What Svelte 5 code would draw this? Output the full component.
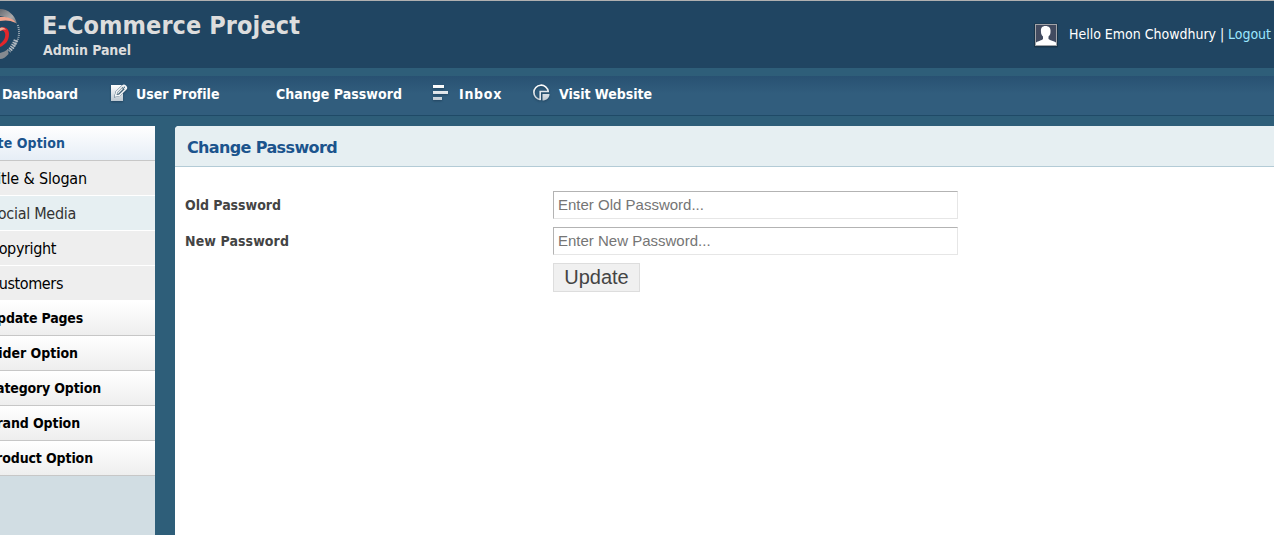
<script>
  const nav = [
    { label: 'Dashboard', icon: '', x: 2, w: 76 },
    { label: 'User Profile', icon: 'edit', x: 136, w: 83 },
    { label: 'Change Password', icon: '', x: 276, w: 126 },
    { label: 'Inbox', icon: 'lines', x: 459, w: 43 },
    { label: 'Visit Website', icon: 'chart', x: 559, w: 93 }
  ].map((n, i, all) => ({ ...n, gap: n.x - (i ? all[i - 1].x + all[i - 1].w : 0) }));

  const menu = [
    { label: 'Site Option', w: 81, kind: 'head open' },
    { label: 'Title & Slogan', w: 98, kind: 'sub' },
    { label: 'Social Media', w: 87, kind: 'sub hover' },
    { label: 'Copyright', w: 67, kind: 'sub' },
    { label: 'Customers', w: 74, kind: 'sub last' },
    { label: 'Update Pages', w: 96, kind: 'head' },
    { label: 'Slider Option', w: 93, kind: 'head' },
    { label: 'Category Option', w: 114, kind: 'head' },
    { label: 'Brand Option', w: 93, kind: 'head' },
    { label: 'Product Option', w: 106, kind: 'head' }
  ].map((m) => ({ ...m, end: m.kind.startsWith('sub') ? m.w - 11 : { 'Site Option': 65, 'Slider Option': 78 }[m.label] ?? m.w - 13 }));

  // Adjusts tracking so that a label occupies its column width.
  function track(node, width) {
    const natural = node.getBoundingClientRect().width;
    node.style.letterSpacing = (width - natural) / node.textContent.length + 'px';
  }
</script>

<div class="page">
  <header>
    <svg class="logo" width="21" height="60" viewBox="0 0 21 60">
      <defs>
        <linearGradient id="steel" x1="0" y1="0" x2="1" y2="1">
          <stop offset="0" stop-color="#666970" /><stop offset=".6" stop-color="#aaa9aa" /><stop offset="1" stop-color="#6d7882" />
        </linearGradient>
      </defs>
      <path d="M0 8C8 8 15 14 17 23C12 18 6 16 0 15Z" fill="url(#steel)" />
      <path d="M0 16C7 15.500 13 17 16 22C10 19 5 19 0 20Z" fill="#f2a48d" />
      <path d="M0 27C5 25 9 28 9 33C9 40 5 44 0 46V43C4 40 6 36 5 32C4 29 2 29 0 30Z" fill="#e3262b" />
      <path d="M0 27C3 26 5 27 6 29C4 28 2 29 0 30Z" fill="#f0b09a" />
      <path d="M0 52C3 51 6 50 8 48L8.500 53C6 56 3 58 0 58Z" fill="#858a90" />
      <path d="M17.800 24C21 33 18 43 9.500 49.500" fill="none" stroke="#9aa8b3" stroke-width="2" stroke-dasharray="1 1" />
      <path d="M16 39C14 44 12 47 9 50" fill="none" stroke="#b5bcc2" stroke-width="4.500" stroke-dasharray="1.500 1" />
    </svg>
    <div class="brand">
      <h1><span use:track={258}>E-Commerce Project</span></h1>
      <p><span use:track={88}>Admin Panel</span></p>
    </div>
    <div class="user">
      <svg width="24" height="25" viewBox="0 0 24 25">
        <rect x="0" y=".5" width="24" height="24" rx="1" fill="#183449" />
        <rect x="1.500" y="1.500" width="21" height="21" fill="#424b60" stroke="#a2a4a8" />
        <path d="M2 22V19.500C4 18 8 17.500 9 16V13.500C7.500 12 7 10.500 7 9C6.500 5 8 3 11.500 3S17 5 16.500 9C16.500 11 16 12 14.500 13.500V16C16 17.500 20 18 22 19.500V22Z" fill="#fff" />
      </svg>
      <span class="hello"><span use:track={147}>Hello Emon Chowdhury</span></span>
      <span class="bar">|</span>
      <a href="#logout"><span use:track={43}>Logout</span></a>
    </div>
  </header>

  <nav>
    {#each nav as n}
      <div class="item" style:padding-left={n.gap + 'px'} style:width={n.gap + n.w + 'px'}>
        {#if n.icon}
          <svg class="icon {n.icon}" width="20" height="22" viewBox="0 0 20 22">
            <defs>
              <linearGradient id="g-{n.icon}" gradientUnits="userSpaceOnUse" x1="0" y1="2" x2="0" y2="18">
                <stop offset="0" stop-color="#fff" /><stop offset="1" stop-color="#bdc8d1" />
              </linearGradient>
            </defs>
            {#if n.icon === 'edit'}
              <path d="M1 2H12L5.500 8.500L4 14.500L10 13L13 10V18H1Z" fill="url(#g-edit)" />
              <path d="M5.500 13L6.500 9L13 2.500C14.500 1.500 17.500 4.500 16 6L9.500 12.300Z" fill="#466579" stroke="#f5f7f8" stroke-width="1.500" />
              <path d="M12 3.500L15 6.500L16.500 4.500L14 2Z" fill="#f5f7f8" /><circle cx="14.300" cy="4.300" r=".7" fill="#315d7d" />
              <path d="M7.500 10.500L12.500 5.500" stroke="#e4e9ed" stroke-width="1.200" />
            {:else if n.icon === 'lines'}
              <path d="M1 2H12V5H1ZM1 8H16V11H1ZM1 14H10V17H1Z" fill="url(#g-lines)" />
            {:else}
              <path d="M8.500 16.600A7.200 7.200 0 1 1 16.200 8.500" fill="none" stroke="url(#g-chart)" stroke-width="1.700" />
              <path d="M8.200 17V8.500H17" fill="none" stroke="#e3e8ec" stroke-width="1.600" />
              <path d="M10.500 17.500V11H17.500C17.500 15 14.500 17.500 10.500 17.500Z" fill="url(#g-chart)" />
            {/if}
          </svg>
        {/if}
        <span use:track={n.w}>{n.label}</span>
      </div>
    {/each}
  </nav>

  <div class="body">
    <aside>
      {#each menu as m}
        <div class="row {m.kind}"><span use:track={m.w} style:margin-left={m.end - m.w + 'px'}>{m.label}</span></div>
      {/each}
    </aside>
    <main>
      <h2><span use:track={150}>Change Password</span></h2>
      <form>
        <label for="old"><span use:track={96}>Old Password</span></label>
        <input id="old" type="password" placeholder="Enter Old Password..." />
        <label for="new"><span use:track={104}>New Password</span></label>
        <input id="new" type="password" placeholder="Enter New Password..." />
        <i></i>
        <button type="button">Update</button>
      </form>
    </main>
  </div>
</div>

<style>
  :global(body) { margin: 0; }
  .page {
    width: 1274px; height: 535px; overflow: hidden; box-sizing: border-box;
    display: flex; flex-direction: column;
    background: #2e5e79; border-top: 1px solid #b0b0b0;
    font-family: "DejaVu Sans Condensed", "DejaVu Sans", Tahoma, sans-serif;
    font-stretch: condensed; color: #444;
  }
  span { white-space: nowrap; display: inline-block; flex: none; }
  header { height: 67px; flex: none; background: #204562; display: flex; align-items: flex-start; }
  .logo { flex: none; }
  .brand { padding: 9px 0 0 21px; flex: 1; color: #ddd; }
  h1 { margin: 0; font-size: 25px; line-height: 32px; height: 30px; }
  p { margin: 0; padding-left: 1px; font-size: 14px; line-height: 20px; font-weight: bold; }
  .user { display: flex; align-items: flex-start; padding: 22px 3px 0 0; color: #fff; font-size: 14px; line-height: 22px; }
  .user svg { margin-right: 11px; }
  .bar { width: 12px; text-align: center; }
  a { color: #9be7ff; text-decoration: none; }
  nav {
    height: 39px; flex: none; margin-top: 8px; display: flex;
    background: linear-gradient(#285172, #315d7d 45%); border-bottom: 1px solid #1f4a67;
    color: #fff; font-size: 14px; font-weight: bold; line-height: 36px;
  }
  .item { box-sizing: border-box; flex: none; display: flex; }
  .icon { margin: 7px 6px 0 -26px; flex: none; filter: drop-shadow(0 1px 1px #18364c99); }
  .lines { margin: 7px 7px 0 -27px; }
  .chart { margin: 7px 7px 0 -27px; }
  .body { display: flex; flex: 1; padding-top: 10px; }
  aside { width: 155px; background: #d1dde3; overflow: hidden; flex: none; }
  .row { height: 35px; box-sizing: border-box; line-height: 35px; color: #000; }
  .head { background: linear-gradient(#fff, #eee); border-bottom: 1px solid #c7c7c7; font-size: 14px; font-weight: bold; line-height: 34px; }
  .open { background: linear-gradient(#fff, #e6eef6); color: #1b548d; }
  .sub { background: #eee; border-bottom: 1px solid #fff; font-size: 16px; }
  .hover { background: #e6eff2; color: #333; }
  main { margin-left: 20px; flex: 1; background: #fff; border-radius: 4px 0 0 0; overflow: hidden; }
  h2 { margin: 0; height: 40px; padding-left: 12px; background: #e6eff2; border-bottom: 1px solid #b3cbd6; color: #1b548d; font-family: "DejaVu Sans", Verdana, sans-serif; font-stretch: normal; font-size: 16px; line-height: 43px; }
  form { padding: 24px 0 0 10px; display: grid; grid-template-columns: 368px 405px; gap: 8px 0; }
  label { font-size: 14px; font-weight: bold; line-height: 28px; height: 28px; }
  input {
    height: 28px; box-sizing: border-box; padding: 0 4px 2px; border: 1px solid; border-color: #b3b3b3 #e6e6e6 #e6e6e6 #b3b3b3;
    font: 15px "Liberation Sans", Arial, sans-serif; border-radius: 0; background: #fff; outline: none;
  }
  input::placeholder { color: #757575; opacity: 1; }
  button {
    justify-self: start; width: 87px; height: 29px; box-sizing: border-box; padding: 0 0 1px; border: 1px solid #ddd;
    background: #f0f0f0; color: #444; font: 20px/26px "Liberation Sans", Arial, sans-serif;
  }
</style>
